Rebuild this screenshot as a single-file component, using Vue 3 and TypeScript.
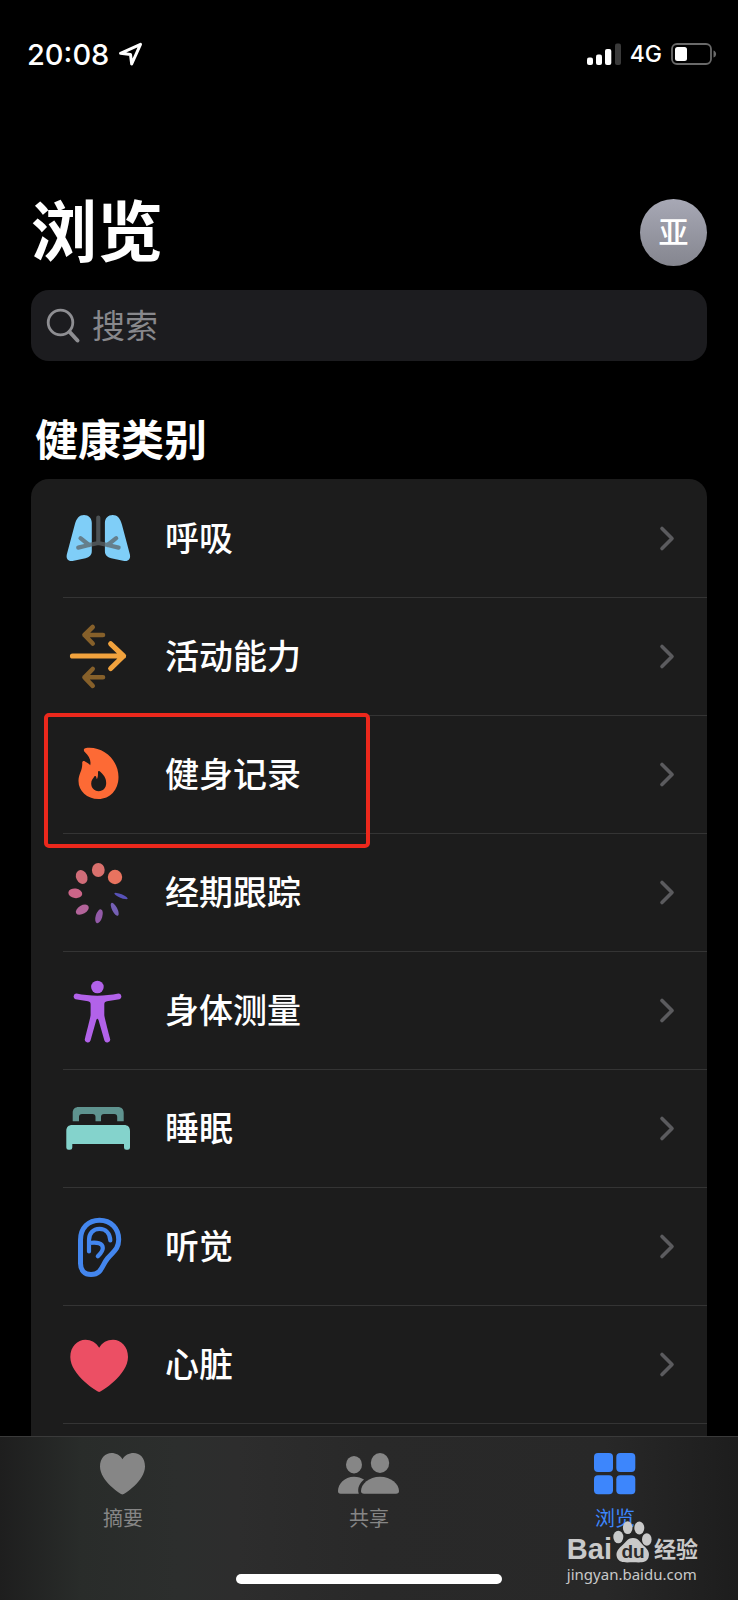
<script setup lang="ts">
import { ref } from 'vue'

type IconName = 'lungs' | 'arrows' | 'flame' | 'cycle' | 'body' | 'bed' | 'ear' | 'heart'

interface Category {
  icon: IconName
  label: string
  marked?: boolean
}

interface Petal {
  cx: number
  cy: number
  rx: number
  ry: number
  angle: number
  color: string
}

const query = ref('')
const activeTab = ref('browse')

const categories: Category[] = [
  { icon: 'lungs', label: '呼吸' },
  { icon: 'arrows', label: '活动能力' },
  { icon: 'flame', label: '健身记录', marked: true },
  { icon: 'cycle', label: '经期跟踪' },
  { icon: 'body', label: '身体测量' },
  { icon: 'bed', label: '睡眠' },
  { icon: 'ear', label: '听觉' },
  { icon: 'heart', label: '心脏' },
]

const petals: Petal[] = [
  { cx: 34.3, cy: 11, rx: 6.4, ry: 7, angle: 0, color: '#d9706d' },
  { cx: 51, cy: 18, rx: 7.2, ry: 7.2, angle: 0, color: '#e8735f' },
  { cx: 17.7, cy: 18, rx: 5.6, ry: 7.1, angle: -25, color: '#d06c78' },
  { cx: 11.3, cy: 34.3, rx: 7, ry: 4.8, angle: 8, color: '#cb6588' },
  { cx: 18.3, cy: 50.7, rx: 7.1, ry: 4.2, angle: -30, color: '#b3649a' },
  { cx: 35, cy: 57.3, rx: 7.2, ry: 3.3, angle: -73, color: '#935aa8' },
  { cx: 50.7, cy: 50.3, rx: 7.2, ry: 2.6, angle: 63, color: '#7560b5' },
  { cx: 57, cy: 37, rx: 7.2, ry: 1.8, angle: 22, color: '#5852b8' },
]

const tabs = [
  { id: 'summary', label: '摘要' },
  { id: 'sharing', label: '共享' },
  { id: 'browse', label: '浏览' },
]
</script>

<template>
  <div class="screen">
    <div class="status">
      <div class="status-side">
        <span class="time">20:08</span>
        <svg class="location" width="26" height="26" viewBox="0 0 26 26">
          <path d="M2.500 12.300 22.500 3.300 13.700 23 12.500 13.500Z" />
        </svg>
      </div>
      <div class="status-side">
        <svg width="34" height="22" viewBox="0 0 34 22">
          <g fill="#fff">
            <rect x="0" y="14.5" width="6" height="7.5" rx="2" />
            <rect x="9" y="11.5" width="6" height="10.5" rx="2" />
            <rect x="18" y="6" width="6.3" height="16" rx="2" />
          </g>
          <rect x="28" y="0.5" width="6" height="21.5" rx="2" fill="#3a3a3a" />
        </svg>
        <span class="network">4G</span>
        <svg width="46" height="22" viewBox="0 0 46 22">
          <rect x="1" y="1" width="39" height="20" rx="5" fill="none" stroke="#6a6a6a" stroke-width="1.8" />
          <rect x="4" y="4" width="12" height="14" rx="2.5" fill="#fff" />
          <path d="M42.5 7.5C46 8.5 46 13.5 42.5 14.5Z" fill="#6a6a6a" />
        </svg>
      </div>
    </div>

    <main class="content">
      <header class="header">
        <h1>浏览</h1>
        <button class="avatar" type="button" aria-label="个人资料">亚</button>
      </header>

      <label class="search">
        <svg width="36" height="36" viewBox="0 0 36 36" fill="none" stroke="#8e8e92" stroke-linecap="round">
          <circle cx="14.5" cy="14.5" r="12.3" stroke-width="2.8" />
          <path d="M23.7 24 31.500 32.500" stroke-width="4" />
        </svg>
        <input v-model="query" type="text" placeholder="搜索" aria-label="搜索" />
      </label>

      <h2>健康类别</h2>

      <ul class="card">
        <li v-for="item in categories" :key="item.label" class="item">
          <a class="row" href="#">
            <svg class="icon" width="68" height="67" viewBox="0 0 68 67">
              <g v-if="item.icon === 'lungs'">
                <g fill="#7fcef8">
                  <path d="M20 10C24.5 10 27.8 13 27.8 18V46C27.8 50 25.5 52.3 21.5 53.2L8.5 55.9C4.5 56.6 1.8 54 2.8 49.5L10.8 19.5C12.5 13 15.5 10 20 10Z" />
                  <path d="M48.7 10C44.2 10 40.9 13 40.9 18V46C40.9 50 43.2 52.3 47.2 53.2L60.2 55.9C64.2 56.6 66.9 54 65.9 49.5L57.9 19.5C56.2 13 53.2 10 48.7 10Z" />
                </g>
                <path
                  fill="none"
                  stroke="#5c6468"
                  stroke-opacity=".75"
                  stroke-width="4.2"
                  stroke-linecap="round"
                  stroke-linejoin="round"
                  d="M34.3 12.5V37.5M14.2 42.6 25 40 34.3 38 43.6 40 54.6 42.6M16.5 33.2 25 40M52.2 33.2 43.6 40"
                />
              </g>
              <g v-else-if="item.icon === 'arrows'" fill="none" stroke-linecap="round" stroke-linejoin="round">
                <path d="M39 12H20.500M28.700 4 20.500 12 28.700 20.500M39 54.300H20.500M28.700 46 20.500 54.300 28.700 62.800" stroke="#86602a" stroke-width="4.6" />
                <path d="M8.5 33H59.500M46.700 20.800 59.500 33 46.700 45.500" stroke="#f1a23d" stroke-width="5.2" />
              </g>
              <g v-else-if="item.icon === 'flame'">
                <path
                  fill="#fd6a35"
                  fill-rule="evenodd"
                  d="M21.2 7.2C38 4.5 54.5 18 54.5 36C54.5 49 46 58 34.5 58C23 58 14.5 50 14.5 40C14.5 33 18.8 29 18.2 21.8C18.2 20.2 19.8 19.6 21 20.5C23 21.5 25 22.5 26.2 24.3C27.5 19 24.5 14.5 21 11.3C19.4 9.8 19.4 7.8 21.2 7.2ZM34 30.5C34.5 29.5 35.8 29.8 36.5 31C41 35 42.2 38.5 42.2 42C42.2 47 39 50.2 34.7 50.2C30 50.2 27.2 46.5 27.2 42.5C27.2 39.5 29 37.5 30.5 35.3C31.2 34.6 32 35 32.2 36L32.8 38.3C34.2 36 34 33 34 30.5Z"
                />
              </g>
              <g v-else-if="item.icon === 'cycle'">
                <ellipse
                  v-for="p in petals"
                  :key="p.color"
                  :cx="p.cx"
                  :cy="p.cy"
                  :rx="p.rx"
                  :ry="p.ry"
                  :fill="p.color"
                  :transform="`rotate(${p.angle} ${p.cx} ${p.cy})`"
                />
              </g>
              <g v-else-if="item.icon === 'body'" fill="#b262e9">
                <circle cx="33.4" cy="10" r="6.3" />
                <path d="M12.5 16.6C26 19.3 40.5 19.3 54.5 16.6A2.9 2.9 0 0 1 55.5 22.2L43 24.2C41 24.6 40.3 25.5 40.3 27.5V38C40.3 40 44.6 56 46 61.5A2.9 2.9 0 0 1 40.4 63.5L34.5 43Q33.4 40.5 32.3 43L26.5 63.5A2.9 2.9 0 0 1 21 61.5C22.3 56 26.6 40 26.6 38V27.5C26.6 25.5 26 24.6 24 24.2L11.5 22.2A2.9 2.9 0 0 1 12.5 16.6Z" />
              </g>
              <g v-else-if="item.icon === 'bed'">
                <path d="M8.7 26.2V18C8.7 14 11 12 14.7 12H53.7C57.4 12 59.7 14 59.7 18V26.2H53.2V22Q53.2 19 50.2 19H40Q37 19 37 22V26.2H31.5V22Q31.5 19 28.5 19H18Q15 19 15 22V26.2Z" fill="#5f938f" />
                <path d="M2.3 52.5V36C2.3 32 4.5 30 8.3 30H60C63.8 30 66 32 66 36V52.5Q66 54.8 63.8 54.8H62.2Q60 54.8 60 52.5V49H8.3V52.5Q8.3 54.8 6 54.8H4.5Q2.3 54.8 2.3 52.5Z" fill="#84d3cc" />
              </g>
              <g v-else-if="item.icon === 'ear'" fill="none" stroke="#4386ee" stroke-linecap="round" stroke-linejoin="round">
                <path stroke-width="5" d="M16.5 27C16.5 15 24.5 7.2 35.5 7.2C47 7.2 54.7 15.5 54.7 26.5C54.7 36 49.5 38.5 43.5 45.5C38 52 38 61.5 27 61.5C20.5 61.5 16.5 57 16.5 50.5Z" />
                <path stroke-width="4.2" d="M46.3 27.5C46 20 41.5 15.8 35.5 15.8C29 15.8 25 20.5 25 27V38.5M25 30C33 29 38.8 30 38.8 35C38.8 38.5 36.5 40.5 33.8 43.3" />
              </g>
              <path
                v-else
                fill="#ec4f64"
                d="M35.2 61C33.5 61 6.3 44 6.3 26C6.3 15.5 13.5 8.8 21.5 8.8C27 8.8 32.2 11.5 35.2 16.8C38.2 11.5 43 8.8 49 8.8C57 8.8 64 15.5 64 26C64 44 36.9 61 35.2 61Z"
              />
            </svg>
            <span class="label">{{ item.label }}</span>
            <svg class="chevron" width="18" height="27" viewBox="0 0 18 27">
              <path d="M4 3.5 14 13.5 4 23.5" />
            </svg>
          </a>
          <span v-if="item.marked" class="marker"></span>
        </li>
      </ul>
    </main>

    <nav class="tabbar">
      <div class="tabs">
        <button
          v-for="tab in tabs"
          :key="tab.id"
          class="tab"
          :class="{ active: activeTab === tab.id }"
          type="button"
          @click="activeTab = tab.id"
        >
          <svg width="64" height="42" viewBox="0 0 64 42" fill="currentColor">
            <path
              v-if="tab.id === 'summary'"
              d="M31.5 41.5C30 41.5 9 28 9 13.5C9 5 14.5 0 20.5 0C25 0 29.2 2.2 31.5 6.3C33.800 2.200 38 0 42.500 0C49 0 54 5 54 13.500C54 28 33 41.500 31.500 41.500Z"
            />
            <g v-else-if="tab.id === 'sharing'">
              <ellipse cx="17" cy="11.7" rx="8" ry="8.7" />
              <ellipse cx="43" cy="10" rx="9.2" ry="10" />
              <path d="M27 40.8Q24 40.8 24 38C24 31 32 23.7 43 23.7C54 23.7 62 31 62 38Q62 40.8 59 40.8Z" />
              <path d="M21.8 40.8H3.5Q1 40.8 1 38C1 31 7.5 23.7 17 23.7C21 23.7 24.5 24.8 27 26.5C22.5 30 20 35.5 21.8 40.8Z" />
            </g>
            <g v-else>
              <rect x="11" y="0" width="19" height="19" rx="4" />
              <rect x="33.3" y="0" width="19" height="19" rx="4" />
              <rect x="11" y="22.3" width="19" height="19" rx="4" />
              <rect x="33.3" y="22.3" width="19" height="19" rx="4" />
            </g>
          </svg>
          <span>{{ tab.label }}</span>
        </button>
      </div>
      <div class="home"></div>

      <div class="credit">
        <div class="credit-brand">
          <span class="credit-bai">Bai</span>
          <svg width="42" height="44" viewBox="0 0 42 44">
            <g fill="#c9c9c9">
              <ellipse cx="6.3" cy="17" rx="5" ry="6.3" />
              <ellipse cx="15.7" cy="7.7" rx="4.8" ry="6.4" />
              <ellipse cx="27.3" cy="8" rx="5" ry="6.4" />
              <ellipse cx="34.8" cy="19.5" rx="4.8" ry="6.2" />
              <path d="M21 18C27 18 28.5 23 32 26C36 29.5 38 33 36.5 37.5C34.5 43.5 28 42.3 21 42.3C14 42.3 7.5 43.5 5 37.5C3.5 33 5.5 29.5 9.5 26C13.5 23 15 18 21 18Z" />
            </g>
            <text x="21" y="38" text-anchor="middle" class="credit-du">du</text>
          </svg>
          <span class="credit-cn">经验</span>
        </div>
        <span class="credit-url">jingyan.baidu.com</span>
      </div>
    </nav>
  </div>
</template>

<style>
body {
  background: #000;
}
</style>

<style scoped>
* {
  box-sizing: border-box;
}

.screen {
  display: flex;
  flex-direction: column;
  height: 100vh;
  overflow: hidden;
  background: #000;
  color: #fff;
  font-family: Inter, "Noto Sans CJK SC", sans-serif;
}

button,
input {
  margin: 0;
  padding: 0;
  border: 0;
  background: none;
  color: inherit;
  font: inherit;
}

svg {
  display: block;
  flex: none;
}

.status {
  display: flex;
  justify-content: space-between;
  align-items: center;
  flex: none;
  height: 108px;
  padding: 0 21px 0 27px;
}

.status-side {
  display: flex;
  align-items: center;
  gap: 9px;
}

.time {
  font-size: 29px;
  font-weight: 500;
}

.location path {
  fill: none;
  stroke: #fff;
  stroke-width: 3;
  stroke-linejoin: round;
}

.network {
  font-size: 23px;
  font-weight: 500;
}

.content {
  display: flex;
  flex-direction: column;
  flex: 1;
  min-height: 0;
  padding: 90px 31px 0;
  overflow: hidden;
}

.header {
  display: flex;
  justify-content: space-between;
  align-items: center;
  flex: none;
  height: 68px;
}

h1 {
  margin: 0;
  font-size: 66px;
  line-height: 70px;
  font-weight: 700;
}

.avatar {
  width: 67px;
  height: 67px;
  border-radius: 50%;
  background: linear-gradient(#a7a8b5, #85868f);
  font-size: 30px;
  line-height: 67px;
  font-weight: 500;
  text-align: center;
}

.search {
  display: flex;
  align-items: center;
  flex: none;
  gap: 10px;
  height: 71px;
  margin-top: 24px;
  padding: 0 15px;
  border-radius: 18px;
  background: #1c1c1f;
}

.search input {
  flex: 1;
  min-width: 0;
  height: 48px;
  outline: none;
  font-size: 33px;
  font-weight: 400;
}

.search input::placeholder {
  color: #88888c;
  opacity: 1;
}

h2 {
  flex: none;
  margin: 51px 0 11px;
  padding-left: 4px;
  font-size: 43px;
  line-height: 56px;
  font-weight: 700;
}

.card {
  flex: 1 0 auto;
  margin: 0;
  padding: 0;
  border-radius: 18px 18px 0 0;
  background: #1c1c1c;
  list-style: none;
}

.item {
  position: relative;
  padding-left: 32px;
}

.row {
  display: flex;
  align-items: center;
  height: 118px;
  padding: 0 31px 0 1px;
  border-top: 1px solid #343434;
  color: #fff;
  text-decoration: none;
}

.item:first-child .row {
  border-top-color: transparent;
}

.item:last-child .row {
  height: 119px;
  border-bottom: 1px solid #343434;
}

.label {
  flex: 1;
  margin-left: 33px;
  font-size: 34px;
  line-height: 48px;
  font-weight: 500;
}

.chevron path {
  fill: none;
  stroke: #5b5b5e;
  stroke-width: 3.6;
  stroke-linecap: round;
  stroke-linejoin: round;
}

.marker {
  position: absolute;
  top: -2px;
  left: 13px;
  width: 326px;
  height: 135px;
  border: 4px solid #ec281c;
  border-radius: 5px;
  pointer-events: none;
  z-index: 1;
}

.tabbar {
  position: relative;
  display: flex;
  flex-direction: column;
  justify-content: space-between;
  align-items: center;
  flex: none;
  height: 164px;
  padding: 16px 0;
  border-top: 1px solid #3a3a3a;
  background: linear-gradient(90deg, #1e1e1e 0%, #292c2a 11%, #2c2e2d 24%, #2d2d2d 32%, #292929 50%, #282828 82%, #1d1d1d 100%);
}

.tabs {
  display: flex;
  align-self: stretch;
}

.tab {
  display: flex;
  flex: 1;
  flex-direction: column;
  align-items: center;
  gap: 9px;
  color: #868686;
  font-size: 20px;
  line-height: 30px;
}

.tab.active {
  color: #3d86fc;
}

.home {
  width: 36%;
  height: 10px;
  border-radius: 5px;
  background: #fff;
}

.credit {
  position: absolute;
  right: 40px;
  bottom: 16px;
  display: flex;
  flex-direction: column;
  color: #c9c9c9;
  pointer-events: none;
}

.credit-brand {
  display: flex;
  align-items: flex-end;
}

.credit-bai {
  font-family: "Liberation Sans", sans-serif;
  font-size: 29px;
  line-height: 29px;
  font-weight: 700;
}

.credit-du {
  fill: #2c2c2c;
  font-family: "Liberation Sans", sans-serif;
  font-size: 19px;
  font-weight: 700;
}

.credit-cn {
  font-size: 22px;
  line-height: 30px;
  font-weight: 700;
}

.credit-url {
  font-family: "Noto Sans", sans-serif;
  font-size: 15px;
  line-height: 20px;
}
</style>
